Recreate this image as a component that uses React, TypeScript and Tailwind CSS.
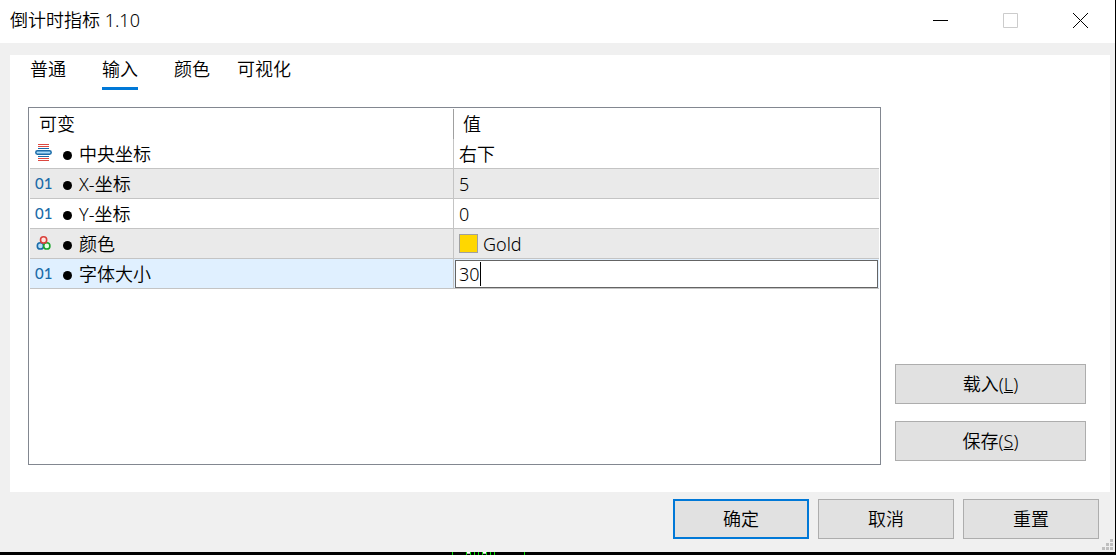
import React from 'react';

type RowKind = 'enum' | 'number' | 'color';

interface Row {
  id: string;
  kind: RowKind;
  label: string;
  value: string;
  editing?: boolean;
}

const tabs = ['普通', '输入', '颜色', '可视化'];

const rows: Row[] = [
  { id: 'corner', kind: 'enum', label: '中央坐标', value: '右下' },
  { id: 'x', kind: 'number', label: 'X-坐标', value: '5' },
  { id: 'y', kind: 'number', label: 'Y-坐标', value: '0' },
  { id: 'color', kind: 'color', label: '颜色', value: 'Gold' },
  { id: 'font-size', kind: 'number', label: '字体大小', value: '30', editing: true },
];

// Price bars of the chart behind the dialog
const chartTicks = [0, 14, 18, 22, 26, 30, 34, 38, 42, 72];

function RowIcon({ kind }: { kind: RowKind }) {
  if (kind === 'number') {
    return (
      <span className="font-['Lato'] text-[15px] leading-4 font-medium text-[#1a6ba8]" aria-hidden="true">
        01
      </span>
    );
  }
  if (kind === 'color') {
    return (
      <svg width="17" height="16" viewBox="0 0 17 16" fill="none" strokeWidth="1.6">
        <circle cx="5.4" cy="10.9" r="3.1" stroke="#1a6ba8" fill="#b5defa" />
        <circle cx="11.8" cy="10.9" r="3.1" stroke="#1ba42c" fill="#e6ffe8" />
        <circle cx="8.6" cy="4.9" r="3.1" stroke="#d9413b" fill="#ffe4e1" />
      </svg>
    );
  }
  return (
    <svg width="17" height="17" viewBox="0 0 17 17" fill="none">
      <path d="M3 0.5h11M3 2.5h11M3 14.5h11M3 16.5h11" stroke="#dc4840" />
      <path d="M3 4.5h11M3 12.5h11" stroke="#1a6ba8" />
      <rect x="0.8" y="6.8" width="15.4" height="3.4" rx="1.7" fill="#a9dcfa" stroke="#1a6ba8" strokeWidth="1.5" />
    </svg>
  );
}

function DialogButton({ children, primary }: { children: React.ReactNode; primary?: boolean }) {
  return (
    <button
      type="button"
      className={`h-10 w-full bg-[#e1e1e1] text-center ${
        primary ? 'border-2 border-[#0078d7]' : 'border border-[#adadad]'
      }`}
    >
      {children}
    </button>
  );
}

function TitleBar() {
  return (
    <header className="flex h-[43px] items-center justify-between bg-white pb-[2px] pl-[10px]">
      <h1 className="pb-[2px]">倒计时指标 1.10</h1>
      <div className="flex">
        <button type="button" aria-label="最小化" className="flex h-9 w-[70px] items-center justify-center">
          <svg width="15" height="15" viewBox="0 0 15 15" stroke="#000">
            <path d="M0 7.5h15" />
          </svg>
        </button>
        <button type="button" aria-label="最大化" disabled className="flex h-9 w-[70px] items-center justify-center">
          <svg width="15" height="15" viewBox="0 0 15 15" fill="none" stroke="#ccc">
            <path d="M0.5 0.5h14v14h-14z" />
          </svg>
        </button>
        <button type="button" aria-label="关闭" className="flex h-9 w-[70px] items-center justify-center">
          <svg width="15" height="15" viewBox="0 0 15 15" stroke="#000">
            <path d="M0 0l15 15M15 0L0 15" />
          </svg>
        </button>
      </div>
    </header>
  );
}

function InputsTable() {
  return (
    <div className="min-w-0 flex-1 border border-[#828790] p-px">
      <table className="w-full table-fixed border-separate border-spacing-0">
        <thead>
          <tr className="h-[30px] text-left">
            <th className="w-[424px] border-r border-[#a0a0a0] p-0 pl-[9px] font-[350]">可变</th>
            <th className="p-0 pl-[9px] font-[350]">值</th>
          </tr>
        </thead>
        <tbody>
          {rows.map((row, i) => {
            const bg = row.editing ? 'bg-[#e0f0ff]' : i % 2 ? 'bg-[#eaeaea]' : 'bg-white';
            return (
              <tr key={row.id} className={`h-[30px] ${bg}`}>
                <td className="border-r border-b border-[#c4c4c4] p-0">
                  <div className="flex h-[29px] items-center pl-[5px]">
                    <span className="flex w-7 pb-[2px]">
                      <RowIcon kind={row.kind} />
                    </span>
                    <span className="mt-[3px] mr-[7px] size-[9px] rounded-full bg-black" />
                    <span id={`label-${row.id}`}>{row.label}</span>
                  </div>
                </td>
                <td className="border-b border-[#c4c4c4] p-0">
                  {row.editing ? (
                    <div className="relative p-px pb-0">
                      <input
                        aria-labelledby={`label-${row.id}`}
                        defaultValue={row.value}
                        className="block h-7 w-full border border-[#646464] bg-white px-[3px] caret-transparent outline-none"
                      />
                      <span className="absolute top-[3px] left-[26px] h-6 w-px bg-black" />
                    </div>
                  ) : (
                    <div className="flex h-[29px] items-center gap-[5px] pl-[5px]">
                      {row.kind === 'color' && <span className="size-[19px] border border-[#a0a0a0] bg-[#ffd700]" />}
                      {row.value}
                    </div>
                  )}
                </td>
              </tr>
            );
          })}
        </tbody>
      </table>
    </div>
  );
}

function ResizeGrip() {
  return (
    <svg width="11" height="11" viewBox="0 0 11 11" fill="#bfbfbf" className="absolute right-[2px] bottom-[2px]">
      <path d="M8 0h3v3H8zM4 4h3v3H4zM8 4h3v3H8zM0 8h3v3H0zM4 8h3v3H4zM8 8h3v3H8z" />
    </svg>
  );
}

export default function App() {
  return (
    <div className="flex min-h-screen flex-col bg-black pr-px font-['Noto_Sans','Noto_Sans_CJK_SC',sans-serif] text-[18px] leading-6 font-[350] text-black">
      <main className="relative flex flex-1 flex-col bg-[#f0f0f0]">
        <TitleBar />

        <section className="mt-3 mr-[5px] ml-[10px] flex flex-1 flex-col bg-white">
          <nav role="tablist" className="flex pl-[2px]">
            {tabs.map((tab) => (
              <button
                key={tab}
                type="button"
                role="tab"
                aria-selected={tab === '输入'}
                className="flex h-[35px] w-[72px] justify-center"
              >
                <span
                  className={`h-full border-b-[3px] pt-[2px] ${
                    tab === '输入' ? 'border-[#0078d7]' : 'border-transparent'
                  }`}
                >
                  {tab}
                </span>
              </button>
            ))}
          </nav>

          <div className="mt-[17px] mr-6 mb-[27px] ml-[18px] flex flex-1 gap-[14px]">
            <InputsTable />
            <div className="flex w-[191px] flex-col justify-end gap-[17px] pb-1">
              <DialogButton>
                载入(<u>L</u>)
              </DialogButton>
              <DialogButton>
                保存(<u>S</u>)
              </DialogButton>
            </div>
          </div>
        </section>

        <footer className="flex justify-end gap-[9px] pt-[7px] pr-4 pb-[13px]">
          <div className="w-[136px]">
            <DialogButton primary>确定</DialogButton>
          </div>
          <div className="w-[136px]">
            <DialogButton>取消</DialogButton>
          </div>
          <div className="w-[136px]">
            <DialogButton>重置</DialogButton>
          </div>
        </footer>
        <ResizeGrip />
      </main>

      <svg width="73" height="3" viewBox="0 0 73 3" className="ml-[452px]">
        <path d="M14 0h5v1h-5zM30 0h5v1h-5z" fill="#fff" />
        <path d="M14 1h5v1h-5zM30 1h5v1h-5z" fill="#bbb" />
        {chartTicks.map((x) => (
          <rect key={x} x={x} width="1" height="3" fill="#00e000" />
        ))}
      </svg>
    </div>
  );
}
